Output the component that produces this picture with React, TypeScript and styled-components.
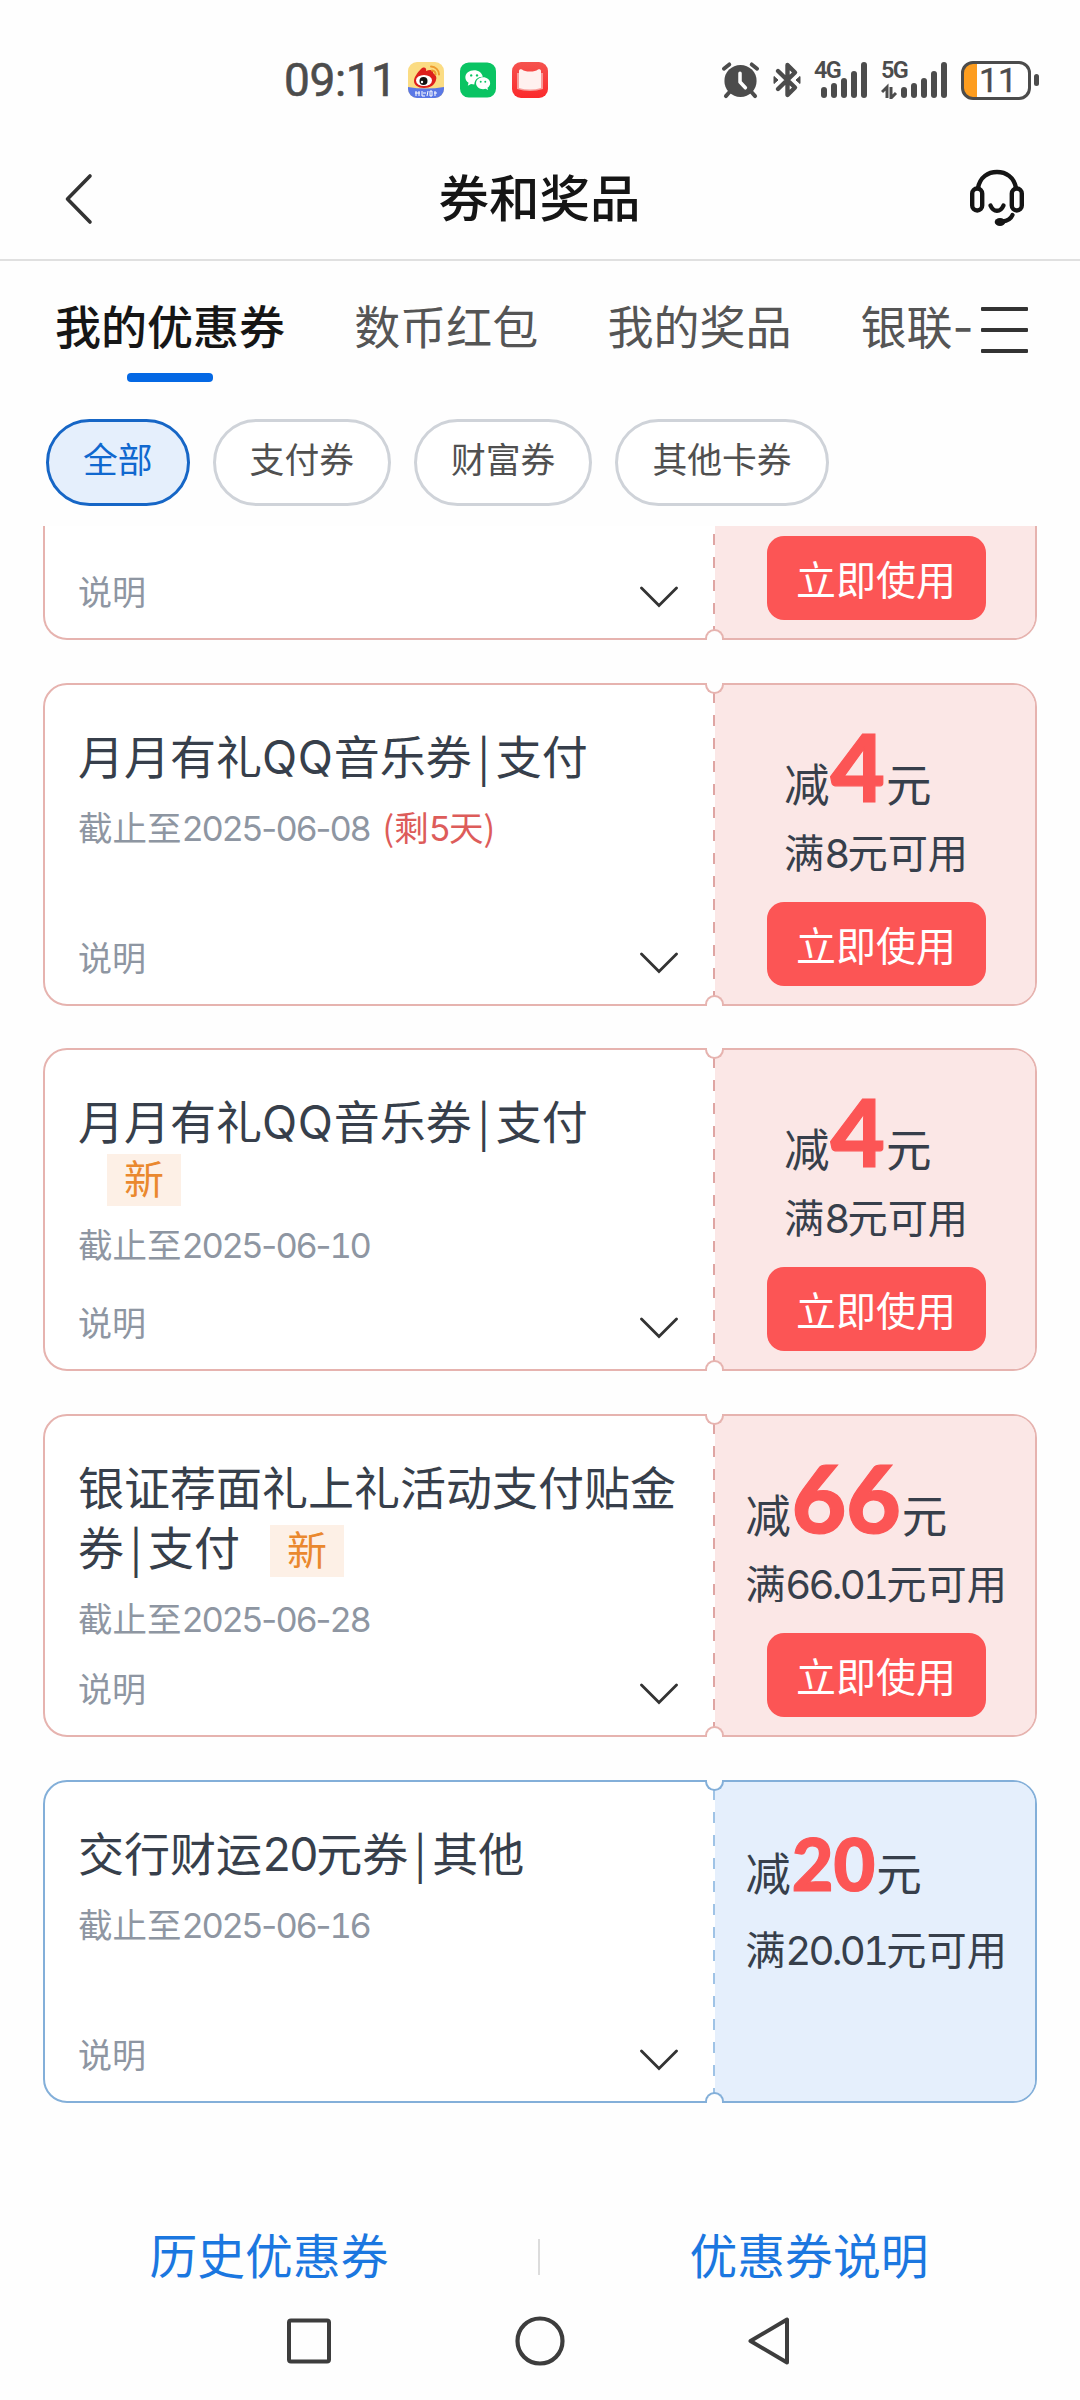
import React from "react";
import styled, { createGlobalStyle } from "styled-components";

const cjk = `"Noto Sans CJK SC", sans-serif`;

const GlobalStyle = createGlobalStyle`
  * { box-sizing: border-box; }
  body { margin: 0; background: #fefefe; font-family: ${cjk}; }
  svg { display: block; flex: none; }
`;

const Screen = styled.div`
  width: 1080px;
  height: 2400px;
  display: flex;
  flex-direction: column;
  background: #fefefe;
  overflow: hidden;
`;

/* ---------- status bar ---------- */
const StatusBar = styled.div`
  height: 140px;
  padding: 20px 41px 0 284px;
  display: flex;
  align-items: center;
  justify-content: space-between;
`;
const StatusGroup = styled.div<{ $gap: number }>`
  display: flex;
  align-items: center;
  gap: ${(p) => p.$gap}px;
`;
const Clock = styled.span`
  width: 108px;
  font: 400 46px/50px Roboto, sans-serif;
  -webkit-text-stroke: 0.6px #4c4c4c;
  letter-spacing: -0.4px;
  color: #4c4c4c;
  white-space: nowrap;
`;
const Signal = styled.div<{ $w: number }>`
  position: relative;
  width: ${(p) => p.$w}px;
  height: 38px;
`;
const NetLabel = styled.span`
  position: absolute;
  left: 0;
  top: -1px;
  font: 600 23.5px/20px Roboto, sans-serif;
  letter-spacing: -1.8px;
  color: #4c4c4c;
`;
const BatteryWrap = styled.div`
  display: flex;
  align-items: center;
  gap: 3px;
`;
const Battery = styled.div`
  width: 70px;
  height: 39px;
  border: 3px solid #4c4c4c;
  border-radius: 12px;
  padding: 0 5px 0 9px;
  display: flex;
  align-items: center;
  justify-content: center;
  background: linear-gradient(90deg, #fd9d1f 13px, #fff 13px);
  font: 400 34px/33px Roboto, sans-serif;
  -webkit-text-stroke: 0.4px #4c4c4c;
  color: #4c4c4c;
`;
const BatteryNub = styled.div`
  width: 5px;
  height: 12px;
  border-radius: 3px;
  background: #4c4c4c;
`;

/* ---------- header ---------- */
const Header = styled.header`
  height: 121px;
  padding: 0 53px 4px 62px;
  border-bottom: 2px solid #e0e0e0;
  display: grid;
  grid-template-columns: 60px 1fr 60px;
  align-items: center;
`;
const PageTitle = styled.h1`
  margin: 0;
  font-size: 50.5px;
  line-height: 60px;
  font-weight: 500;
  color: #151515;
  text-align: center;
  padding: 0 10px 6px 0;
`;

/* ---------- tabs ---------- */
const TabBar = styled.nav`
  height: 139px;
  padding: 0 51px 0 55px;
  display: flex;
  align-items: flex-start;
`;
const TabStrip = styled.div`
  width: 918px;
  height: 139px;
  display: flex;
  gap: 69.2px;
  overflow: hidden;
`;
const Tab = styled.div<{ $active?: boolean }>`
  flex: none;
  padding-top: 33px;
  display: flex;
  flex-direction: column;
  align-items: center;
  font-size: 46px;
  line-height: 60px;
  font-weight: ${(p) => (p.$active ? 500 : 400)};
  color: ${(p) => (p.$active ? "#161616" : "#555")};
  white-space: nowrap;
`;
const TabUnderline = styled.div`
  margin-top: 19px;
  width: 86px;
  height: 9px;
  border-radius: 4px;
  background: #0468e4;
`;
const MenuButton = styled.div`
  margin: 46px 0 0 8px;
  width: 47px;
  display: flex;
  flex-direction: column;
  gap: 17px;
`;
const MenuLine = styled.div`
  height: 4px;
  border-radius: 1px;
  background: #333;
`;

/* ---------- filter chips ---------- */
const Chips = styled.div`
  height: 126px;
  padding: 19px 46px 0;
  display: flex;
  gap: 23px;
`;
const Chip = styled.div<{ $active?: boolean }>`
  height: 87px;
  padding: 0 34px 6px;
  border: 3px solid ${(p) => (p.$active ? "#1666c6" : "#cfd3d9")};
  border-radius: 44px;
  background: ${(p) => (p.$active ? "#e5effc" : "#fff")};
  color: ${(p) => (p.$active ? "#1068cf" : "#505050")};
  font-size: 34.8px;
  line-height: 73px;
  white-space: nowrap;
`;

/* ---------- coupons ---------- */
const CouponList = styled.main`
  height: 1662px;
  padding: 0 43px;
  display: flex;
  flex-direction: column;
  gap: 42.7px;
`;
const tones = {
  red: { bg: "#fbe7e6", line: "#e6b3af", dash: "#dfa5a3" },
  blue: { bg: "#e5effc", line: "#83afd9", dash: "#9fc3e6" },
};
type Tone = keyof typeof tones;

const CouponCard = styled.article<{ $tone: Tone; $cut?: boolean }>`
  flex: none;
  position: relative;
  height: ${(p) => (p.$cut ? 114 : 323)}px;
  display: flex;
  border: 2px solid ${(p) => tones[p.$tone].line};
  border-radius: 24px;
  background: #fff;
  ${(p) => p.$cut && "border-top: none; border-radius: 0 0 24px 24px;"}
`;
const Notch = styled.div<{ $tone: Tone; $bottom?: boolean }>`
  position: absolute;
  left: 660px;
  width: 19px;
  height: 11px;
  background: #fefefe;
  border: 2px solid ${(p) => tones[p.$tone].line};
  ${(p) =>
    p.$bottom
      ? "bottom: -2px; border-bottom: none; border-radius: 10px 10px 0 0;"
      : "top: -2px; border-top: none; border-radius: 0 0 10px 10px;"}
`;
const CouponInfo = styled.div`
  width: 668px;
  padding: 39px 33px 22px;
  display: flex;
  flex-direction: column;
`;
const TitleRow = styled.div<{ $badgeOnly?: boolean }>`
  height: ${(p) => (p.$badgeOnly ? 52 : 60)}px;
  padding-top: ${(p) => (p.$badgeOnly ? 5 : 0)}px;
  display: flex;
  font-size: 46px;
  line-height: 61px;
  color: #373f4b;
  white-space: nowrap;
`;
const Bar = styled.span`
  display: inline-block;
  width: 24px;
  text-align: center;
`;
const Num = styled.span<{ $tight?: boolean }>`
  font-family: Inter, sans-serif;
  font-variant-numeric: tabular-nums;
  letter-spacing: ${(p) => (p.$tight ? "-0.07em" : "-0.06em")};
`;
const Latin = styled.span`
  font-family: Inter, sans-serif;
  letter-spacing: 0.015em;
`;
const Dash = styled.span`
  font-family: Inter, sans-serif;
  letter-spacing: 0;
  font-variant-numeric: normal;
  margin: 0 -0.05em 0 0;
`;
const NewBadge = styled.span<{ $low?: boolean }>`
  margin: ${(p) => (p.$low ? "10px 0 0 30px" : "0 0 0 29px")};
  width: 74px;
  height: 52px;
  background: #fdf0e6;
  color: #ea882e;
  font-size: 40px;
  line-height: 46px;
  text-align: center;
`;
const Expiry = styled.div`
  margin-top: 17px;
  height: 50px;
  display: flex;
  font-size: 34.5px;
  line-height: 50px;
  color: #8e96a2;
  white-space: nowrap;
`;
const Remaining = styled.span`
  margin-left: 13px;
  color: #dd5c5a;
`;
const DetailRow = styled.div`
  margin-top: auto;
  height: 50px;
  padding-right: 2px;
  display: flex;
  align-items: center;
  justify-content: space-between;
  font-size: 34px;
  line-height: 50px;
  color: #8e96a2;
`;
const Perforation = styled.div<{ $tone: Tone; $cut?: boolean }>`
  width: 2px;
  background: repeating-linear-gradient(
    180deg,
    ${(p) => tones[p.$tone].dash} 0 11px,
    #fff 11px 23px
  );
  background-position: 0 ${(p) => (p.$cut ? 8 : 7)}px;
  background-size: 2px 23px;
`;
const CouponValue = styled.div<{ $tone: Tone }>`
  flex: 1;
  padding: 0 0 18px 2px;
  border-radius: 0 21px 21px 0;
  background: ${(p) => tones[p.$tone].bg};
  display: flex;
  flex-direction: column;
  align-items: center;
`;
const CutValue = styled(CouponValue)`
  border-radius: 0 0 21px 0;
`;
const ValueText = styled.div`
  padding-top: 32px;
  color: #373f4b;
`;
const AmountLine = styled.div`
  height: 104px;
  display: flex;
  align-items: baseline;
  font-size: 45.5px;
  line-height: 98px;
  white-space: nowrap;
`;
const Amount = styled.span<{ $small?: boolean }>`
  margin: 0 1px;
  font-family: Lato, sans-serif;
  font-size: ${(p) => (p.$small ? 72 : 94)}px;
  font-weight: 900;
  -webkit-text-stroke: 1.2px #fc5555;
  color: #fc5555;
`;
const Condition = styled.div`
  height: 60px;
  font-size: 40.2px;
  line-height: 60px;
  white-space: nowrap;
`;
const UseButton = styled.button`
  margin-top: auto;
  width: 219px;
  height: 84px;
  padding: 0;
  border: none;
  border-radius: 17px;
  background: #fc5555;
  color: #fff;
  font: 400 40px/82px ${cjk};
`;

/* ---------- footer ---------- */
const FooterLinks = styled.footer`
  height: 138px;
  padding-right: 2px;
  display: flex;
  align-items: center;
`;
const FooterLink = styled.a`
  flex: 1;
  padding-bottom: 6px;
  text-align: center;
  font-size: 47.8px;
  line-height: 60px;
  color: #1b77e0;
`;
const FooterDivider = styled.div`
  width: 2px;
  height: 36px;
  background: #dcdcdc;
`;
const NavBar = styled.div`
  flex: 1;
  padding: 0 285px;
  display: flex;
  align-items: flex-start;
  justify-content: space-between;
`;
const NavIcon = styled.svg`
  margin-top: -10px;
`;

const ink = "#4c4c4c";

const Bars = ({ x }: { x: number }) => (
  <g fill={ink}>
    <rect x={x} y="26" width="6" height="11" rx="3" />
    <rect x={x + 10} y="22" width="6" height="15" rx="3" />
    <rect x={x + 20} y="17" width="6" height="20" rx="3" />
    <rect x={x + 30} y="10" width="6" height="27" rx="3" />
    <rect x={x + 40} y="1" width="6" height="36" rx="3" />
  </g>
);

const WeiboIcon = () => (
  <svg width="36" height="36" viewBox="0 0 36 36">
    <rect width="36" height="36" rx="9" fill="#fbdc83" />
    <path d="M0 25Q18 28 36 25V27a9 9 0 0 1-9 9H9a9 9 0 0 1-9-9Z" fill="#5a78e6" />
    <path d="M13 7c3-3 6-1 5 2 4-2 8-1 7 2 3 2 4 4 3 7-1 5-6 8-12 8S6 23 6 19c0-4 4-9 7-12Z" fill="#dd1f1c" />
    <ellipse cx="16" cy="18.500" rx="8" ry="5.500" fill="#fff" />
    <circle cx="15.500" cy="19" r="4" fill="#111" />
    <circle cx="14" cy="20" r="1.200" fill="#fff" />
    <path d="M23 4.500a8 8 0 0 1 8 8M24 8.500a4 4 0 0 1 3.600 4" fill="none" stroke="#ee9a2d" strokeWidth="2" strokeLinecap="round" />
    <path d="M8 29v5M7 31h5M11 29v5M14 29v5h3M15 31h3M20 29l-1 5M22 29h2v5h-2zM27 29v5M26 31h3" fill="none" stroke="#fff" strokeWidth="1" />
  </svg>
);

const WechatIcon = () => (
  <svg width="36" height="36" viewBox="0 0 37 36">
    <rect width="37" height="36" rx="9" fill="#0ac463" />
    <path d="M14.500 8C9.500 8 5.500 11.200 5.500 15.300c0 2.400 1.300 4.300 3.300 5.600L8 23.800l3.300-1.700c1.200.3 2.200.5 3.400.5C15 17.500 19 14.500 23.500 14.800 22.800 10.800 19 8 14.500 8Z" fill="#fff" />
    <path d="M31 21.300c0-3.400-3.400-6-7.300-6s-7.200 2.600-7.200 6 3.300 6.100 7.200 6.100c.9 0 1.800-.2 2.600-.4l2.600 1.400-.7-2.400c1.700-1.200 2.800-2.800 2.800-4.700Z" fill="#fff" />
    <g fill="#0ac463">
      <circle cx="11.500" cy="13.300" r="1.200" />
      <circle cx="17.500" cy="13.300" r="1.200" />
      <circle cx="21.300" cy="19.800" r="1" />
      <circle cx="26" cy="19.800" r="1" />
    </g>
  </svg>
);

const BookIcon = () => (
  <svg width="36" height="36" viewBox="0 0 36 36">
    <defs>
      <linearGradient id="bookRed" x1="0" y1="0" x2="0" y2="1">
        <stop offset="0" stopColor="#f5534f" />
        <stop offset="1" stopColor="#fb2a2c" />
      </linearGradient>
    </defs>
    <rect width="36" height="36" rx="9" fill="url(#bookRed)" />
    <path d="M5 11h26v16q-6 2-13 2T5 27Z" fill="#f99c99" />
    <path d="M7 9c0-2 2-2 3-1.500 2 1.500 4 2 8 2s6-.5 8-2c1-.5 3-.5 3 1.500v17q-5 1.500-11 1.500T7 26Z" fill="#fff1ef" />
  </svg>
);

const AlarmIcon = () => (
  <svg width="39" height="38" viewBox="0 0 40 38">
    <circle cx="20" cy="20" r="16.500" fill={ink} />
    <path d="M3 7.500 8.500 3M37 7.500 31.500 3M9 31l-4 4.500M31 31l4 4.500" stroke={ink} strokeWidth="4" strokeLinecap="round" />
    <path d="M19.500 12v9l5.500 6" fill="none" stroke="#fefefe" strokeWidth="3.600" strokeLinecap="round" strokeLinejoin="round" />
  </svg>
);

const BluetoothIcon = () => (
  <svg width="28" height="38" viewBox="0 0 28 38">
    <path d="M5 10 22 26.500l-7.500 7.500V4L22 11.500 5 28" fill="none" stroke={ink} strokeWidth="4.400" strokeLinejoin="round" strokeLinecap="round" />
    <path d="M1 15.500 5 19l-4 3.500ZM27 15.500 23 19l4 3.500Z" fill={ink} stroke={ink} />
  </svg>
);

const ChevronSvg = styled.svg`
  margin-top: 12px;
`;
const Chevron = () => (
  <ChevronSvg width="38" height="22" viewBox="0 0 38 22">
    <path d="M1.500 2 19 19.500 36.500 2" fill="none" stroke="#333" strokeWidth="2.800" strokeLinecap="round" />
  </ChevronSvg>
);

type Coupon = {
  tone: Tone;
  rows: React.ReactNode[];
  badge?: "inline" | "own";
  date: string;
  days?: number;
  amount: string;
  min: string;
  usable: boolean;
};

const coupons: Coupon[] = [
  {
    tone: "red",
    rows: [<span key="t">月月有礼<Latin>QQ</Latin>音乐券<Bar>|</Bar>支付</span>],
    date: "2025-06-08",
    days: 5,
    amount: "4",
    min: "8",
    usable: true,
  },
  {
    tone: "red",
    rows: [<span key="t">月月有礼<Latin>QQ</Latin>音乐券<Bar>|</Bar>支付</span>],
    badge: "own",
    date: "2025-06-10",
    amount: "4",
    min: "8",
    usable: true,
  },
  {
    tone: "red",
    rows: ["银证荐面礼上礼活动支付贴金", <span key="t">券<Bar>|</Bar>支付</span>],
    badge: "inline",
    date: "2025-06-28",
    amount: "66",
    min: "66.01",
    usable: true,
  },
  {
    tone: "blue",
    rows: [<span key="t">交行财运<Num>20</Num>元券<Bar>|</Bar>其他</span>],
    date: "2025-06-16",
    amount: "20",
    min: "20.01",
    usable: false,
  },
];

const DateText = ({ value }: { value: string }) => (
  <Num $tight>
    {value.split("-").map((part, i) => (
      <React.Fragment key={i}>
        {i > 0 && <Dash>-</Dash>}
        {part}
      </React.Fragment>
    ))}
  </Num>
);

const CouponView = ({ c }: { c: Coupon }) => (
  <CouponCard $tone={c.tone}>
    <CouponInfo>
      {c.rows.map((row, i) => (
        <TitleRow key={i}>
          {row}
          {c.badge === "inline" && i === c.rows.length - 1 && <NewBadge $low>新</NewBadge>}
        </TitleRow>
      ))}
      {c.badge === "own" && (
        <TitleRow $badgeOnly>
          <NewBadge>新</NewBadge>
        </TitleRow>
      )}
      <Expiry>
        <span>截止至<DateText value={c.date} /></span>
        {c.days && <Remaining>(剩<Num>{c.days}</Num>天)</Remaining>}
      </Expiry>
      <DetailRow>
        说明
        <Chevron />
      </DetailRow>
    </CouponInfo>
    <Perforation $tone={c.tone} />
    <CouponValue $tone={c.tone}>
      <ValueText>
        <AmountLine>
          减<Amount $small={!c.usable}>{c.amount}</Amount>元
        </AmountLine>
        <Condition>满<Num $tight>{c.min}</Num>元可用</Condition>
      </ValueText>
      {c.usable && <UseButton>立即使用</UseButton>}
    </CouponValue>
    <Notch $tone={c.tone} />
    <Notch $tone={c.tone} $bottom />
  </CouponCard>
);

export default function App() {
  return (
    <Screen>
      <GlobalStyle />
      <StatusBar>
        <StatusGroup $gap={16}>
          <Clock>09:11</Clock>
          <WeiboIcon />
          <WechatIcon />
          <BookIcon />
        </StatusGroup>
        <StatusGroup $gap={13}>
          <AlarmIcon />
          <BluetoothIcon />
          <Signal $w={54}>
            <NetLabel>4G</NetLabel>
            <svg width="54" height="38"><Bars x={7} /></svg>
          </Signal>
          <Signal $w={67}>
            <NetLabel>5G</NetLabel>
            <svg width="67" height="38">
              <path d="M1 31 6 26v11M10 26v11l5-5" fill="none" stroke={ink} strokeWidth="3" />
              <Bars x={20} />
            </svg>
          </Signal>
          <BatteryWrap>
            <Battery>11</Battery>
            <BatteryNub />
          </BatteryWrap>
        </StatusGroup>
      </StatusBar>

      <Header>
        <svg width="34" height="54" viewBox="0 0 34 54">
          <path d="M28 5 5.500 28 28 51" fill="none" stroke="#333" strokeWidth="3.600" strokeLinecap="round" strokeLinejoin="round" />
        </svg>
        <PageTitle>券和奖品</PageTitle>
        <svg width="60" height="60" viewBox="0 0 60 60">
          <g fill="none" stroke="#151515" strokeWidth="4.400" strokeLinecap="round">
            <rect x="5.200" y="20.500" width="10" height="22" rx="5" />
            <rect x="44.800" y="20.500" width="10" height="22" rx="5" />
            <path d="M11 20C13 9 21 4 30 4s17 5 19 16" />
            <path d="M23.500 37.500c3 7 10 7 13 0M45.500 47c-1.500 3.500-5 6-10 6.500" />
          </g>
          <ellipse cx="33" cy="54" rx="5.300" ry="4" fill="#151515" />
        </svg>
      </Header>

      <TabBar>
        <TabStrip>
          <Tab $active>
            我的优惠券
            <TabUnderline />
          </Tab>
          <Tab>数币红包</Tab>
          <Tab>我的奖品</Tab>
          <Tab><span>银联<Dash>-</Dash></span></Tab>
        </TabStrip>
        <MenuButton>
          <MenuLine />
          <MenuLine />
          <MenuLine />
        </MenuButton>
      </TabBar>

      <Chips>
        <Chip $active>全部</Chip>
        <Chip>支付券</Chip>
        <Chip>财富券</Chip>
        <Chip>其他卡券</Chip>
      </Chips>

      <CouponList>
        <CouponCard $tone="red" $cut>
          <CouponInfo>
            <DetailRow>
              说明
              <Chevron />
            </DetailRow>
          </CouponInfo>
          <Perforation $tone="red" $cut />
          <CutValue $tone="red">
            <UseButton>立即使用</UseButton>
          </CutValue>
          <Notch $tone="red" $bottom />
        </CouponCard>
        {coupons.map((c) => (
          <CouponView key={c.date} c={c} />
        ))}
      </CouponList>

      <FooterLinks>
        <FooterLink>历史优惠券</FooterLink>
        <FooterDivider />
        <FooterLink>优惠券说明</FooterLink>
      </FooterLinks>
      <NavBar>
        <NavIcon width="48" height="50" viewBox="0 0 48 50">
          <rect x="4" y="4.500" width="40" height="41" rx="2" fill="none" stroke="#3d3d3d" strokeWidth="4" />
        </NavIcon>
        <NavIcon width="50" height="50" viewBox="0 0 50 50">
          <circle cx="25" cy="25" r="22.500" fill="none" stroke="#3d3d3d" strokeWidth="4.200" />
        </NavIcon>
        <NavIcon width="48" height="50" viewBox="0 0 48 50">
          <path d="M40 3.500v43L3.500 25Z" fill="none" stroke="#3d3d3d" strokeWidth="4" strokeLinejoin="round" />
        </NavIcon>
      </NavBar>
    </Screen>
  );
}
